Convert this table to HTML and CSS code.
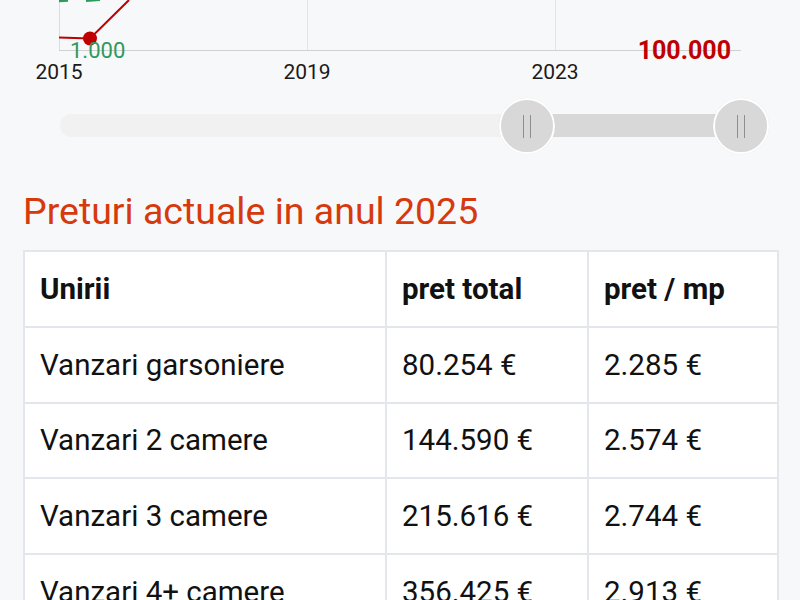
FILE: index.html
```html
<!DOCTYPE html>
<html lang="ro">
<head>
<meta charset="utf-8">
<title>Preturi actuale</title>
<link rel="stylesheet" href="styles.css">
</head>
<body>
<div class="chart">
  <svg class="chart-svg" width="800" height="96" viewBox="0 0 800 96">
    <line x1="59.5" y1="0" x2="59.5" y2="50.5" stroke="#dcdcdc" stroke-width="1"/>
    <line x1="307.5" y1="0" x2="307.5" y2="50.5" stroke="#e4e4e4" stroke-width="1"/>
    <line x1="555.5" y1="0" x2="555.5" y2="50.5" stroke="#e4e4e4" stroke-width="1"/>
    <line x1="59" y1="50.5" x2="741" y2="50.5" stroke="#d0d0d0" stroke-width="1"/>
    <path d="M59 1 L68 0.5" stroke="#2e9a5c" stroke-width="2.5" fill="none"/>
    <path d="M86 1 L100 0" stroke="#2e9a5c" stroke-width="2" fill="none"/>
    <polyline points="59,37.5 90,38.5 129,0" stroke="#c00000" stroke-width="2" fill="none"/>
    <circle cx="90" cy="38.5" r="7" fill="#c00000"/>
    <text class="lbl-green" x="70" y="58">1.000</text>
    <text class="lbl-red" x="731" y="59" text-anchor="end">100.000</text>
    <text class="lbl-year" x="59" y="79" text-anchor="middle">2015</text>
    <text class="lbl-year" x="307" y="79" text-anchor="middle">2019</text>
    <text class="lbl-year" x="555" y="79" text-anchor="middle">2023</text>
  </svg>
</div>

<div class="slider">
  <div class="track">
    <div class="range"></div>
  </div>
  <div class="handle handle-a"><span class="grip"></span></div>
  <div class="handle handle-b"><span class="grip"></span></div>
</div>

<h2 class="title">Preturi actuale in anul 2025</h2>

<table class="prices">
  <thead>
    <tr><th class="c1">Unirii</th><th class="c2">pret total</th><th class="c3">pret / mp</th></tr>
  </thead>
  <tbody>
    <tr><td>Vanzari garsoniere</td><td>80.254 €</td><td>2.285 €</td></tr>
    <tr><td>Vanzari 2 camere</td><td>144.590 €</td><td>2.574 €</td></tr>
    <tr><td>Vanzari 3 camere</td><td>215.616 €</td><td>2.744 €</td></tr>
    <tr><td>Vanzari 4+ camere</td><td>356.425 €</td><td>2.913 €</td></tr>
  </tbody>
</table>
</body>
</html>
```

FILE: styles.css
```css
html, body {
  margin: 0;
  padding: 0;
  background: #f7f8fa;
  font-family: Roboto, "Liberation Sans", sans-serif;
  color: #111;
}

.chart {
  height: 96px;
}
.chart-svg {
  display: block;
}
.lbl-green {
  font-family: Roboto, sans-serif;
  font-size: 22px;
  fill: #2e9a5c;
}
.lbl-red {
  font-family: Roboto, sans-serif;
  font-size: 25px;
  font-weight: 700;
  fill: #c00000;
}
.lbl-year {
  font-family: Roboto, sans-serif;
  font-size: 21px;
  fill: #1a1a1a;
}

.slider {
  position: relative;
  height: 58px;
  margin: 0 33px 0 60px;
  display: flex;
  align-items: center;
}
.track {
  position: relative;
  flex: 1;
  height: 23px;
  border-radius: 12px;
  background: #f1f1f1;
}
.range {
  position: absolute;
  left: 466px;
  width: 214px;
  top: 0;
  bottom: 0;
  background: #d8d8d8;
}
.handle {
  position: absolute;
  top: 2px;
  width: 52px;
  height: 52px;
  border-radius: 50%;
  background: #d8d8d8;
  border: 2px solid #ffffff;
  box-shadow: 0 0 1px rgba(0,0,0,0.12);
  display: flex;
  align-items: center;
  justify-content: center;
}
.handle-a { left: 439px; }
.handle-b { left: 653px; }
.grip {
  width: 6px;
  height: 23px;
  border-left: 1.5px solid #8e8e8e;
  border-right: 1.5px solid #8e8e8e;
}

.title {
  margin: 36px 0 17px 23px;
  font-size: 37.5px;
  line-height: 43px;
  font-weight: 400;
  color: #d63a0c;
}

.prices {
  margin-left: 23px;
  width: 754px;
  border-collapse: collapse;
  background: #ffffff;
  table-layout: fixed;
}
.prices th,
.prices td {
  border: 2px solid #e3e6ea;
  height: 75.75px;
  padding: 0 15px;
  text-align: left;
  vertical-align: middle;
  font-size: 29.5px;
  line-height: 34px;
  box-sizing: border-box;
}
.prices th {
  font-weight: 700;
}
.prices .c1 { width: 362px; }
.prices .c2 { width: 202px; }
.prices .c3 { width: 190px; }
```
